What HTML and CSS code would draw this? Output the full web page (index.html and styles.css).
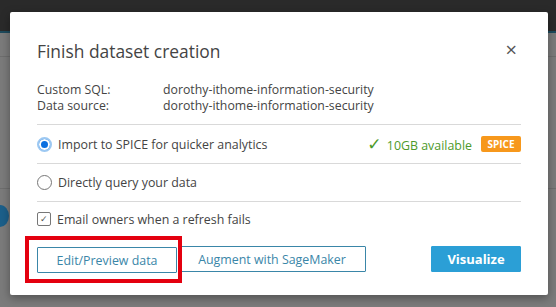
FILE: index.html
```html
<!DOCTYPE html>
<html lang="en">
<head>
    <meta charset="UTF-8">
    <title>Finish dataset creation</title>
    <link rel="stylesheet" href="styles.css">
</head>
<body>

    <!-- Fondo atenuado de la app -->
    <div class="app-bg">
        <div class="topbar"></div>
        <div class="subbar"></div>
        <div class="bg-row"></div>
        <div class="bg-row second"></div>
        <div class="bg-logo"></div>
    </div>

    <div class="modal">
        <div class="modal-header">
            <h2>Finish dataset creation</h2>
            <span class="close-btn">&times;</span>
        </div>

        <div class="meta">
            <div class="meta-row"><span class="meta-label">Custom SQL:</span><span>dorothy-ithome-information-security</span></div>
            <div class="meta-row"><span class="meta-label">Data source:</span><span>dorothy-ithome-information-security</span></div>
        </div>

        <div class="option">
            <span class="radio checked"></span>
            <span class="option-text">Import to SPICE for quicker analytics</span>
            <span class="available"><span class="tick">&#10003;</span> 10GB available</span>
            <span class="spice-badge">SPICE</span>
        </div>
        <div class="option">
            <span class="radio"></span>
            <span class="option-text">Directly query your data</span>
        </div>
        <div class="option last">
            <span class="checkbox">&#10003;</span>
            <span class="option-text">Email owners when a refresh fails</span>
        </div>

        <div class="actions">
            <div class="highlight">
                <button class="btn btn-outline">Edit/Preview data</button>
            </div>
            <button class="btn btn-outline wide">Augment with SageMaker</button>
            <button class="btn btn-primary">Visualize</button>
        </div>
    </div>

</body>
</html>
```

FILE: styles.css
```css
* {
    margin: 0;
    padding: 0;
    box-sizing: border-box;
}

body {
    width: 556px;
    height: 307px;
    overflow: hidden;
    background-color: #7b7b7b;
    font-family: 'Open Sans', 'Liberation Sans', sans-serif;
    position: relative;
}

/* Fondo */
.app-bg {
    height: 100%;
}

.topbar {
    height: 31px;
    background-color: #2a2a2a;
}

.subbar {
    height: 2px;
    background-color: #1d4a5c;
}

.bg-row {
    height: 24px;
    border-bottom: 1px solid #6e6e6e;
}

.bg-row.second {
    height: 132px;
}

.bg-logo {
    width: 18px;
    height: 22px;
    margin-top: 16px;
    margin-left: -9px;
    border-radius: 50%;
    background-color: #1b5f8a;
}

/* Modal */
.modal {
    position: absolute;
    top: 12px;
    left: 10px;
    width: 538px;
    height: 283px;
    background-color: #fff;
    border-radius: 2px;
    box-shadow: 0 3px 10px rgba(0,0,0,0.35);
    padding: 27px 27px 0 27px;
    color: #444;
}

.modal-header {
    display: flex;
    justify-content: space-between;
    align-items: center;
    height: 24px;
}

.modal-header h2 {
    font-size: 17.4px;
    font-weight: 400;
    color: #444;
}

.close-btn {
    font-size: 20px;
    color: #555;
    margin-right: 4px;
    margin-top: -4px;
}

.meta {
    margin-top: 19px;
    margin-bottom: 10px;
    font-size: 12.3px;
    line-height: 16px;
}

.meta-label {
    display: inline-block;
    width: 126px;
}

.option {
    display: flex;
    align-items: center;
    height: 39px;
    border-top: 1px solid #d9d9d9;
    font-size: 12.4px;
    color: #444;
}

.option + .option {
    height: 38px;
}

.option.last {
    height: 35px;
}

.radio {
    width: 15px;
    height: 15px;
    border: 1px solid #777;
    border-radius: 50%;
    margin-right: 6px;
    flex-shrink: 0;
}

.radio.checked {
    border: 2px solid #9cc8f2;
    background-color: #0a6fe0;
    box-shadow: inset 0 0 0 2px #fff;
}

.checkbox {
    width: 14px;
    height: 14px;
    border: 1px solid #777;
    border-radius: 2px;
    margin-right: 6px;
    font-size: 9px;
    line-height: 12px;
    text-align: center;
    color: #555;
}

.available {
    margin-left: auto;
    color: #4d9a2a;
    font-size: 12.4px;
}

.tick {
    font-size: 17px;
    font-family: 'DejaVu Sans', sans-serif;
    margin-right: 2px;
}

.spice-badge {
    margin-left: 9px;
    width: 40px;
    height: 16px;
    line-height: 16px;
    text-align: center;
    background-color: #f7981c;
    color: #fff;
    font-size: 10px;
    font-weight: 700;
    border-radius: 2px;
}

/* Botones */
.actions {
    display: flex;
    align-items: center;
}

.highlight {
    position: relative;
    z-index: 1;
    border: 4px solid #e4000f;
    padding: 7px 1px 6px 8px;
    margin-left: -12px;
}

.btn {
    height: 26px;
    font-family: inherit;
    font-size: 12.4px;
    background-color: #fff;
    border: 1px solid #3a86a8;
    color: #3a86a8;
    border-radius: 1px;
}

.btn-outline {
    width: 140px;
}

.btn-outline.wide {
    width: 188px;
    margin-left: -4px;
    margin-top: -1px;
}

.btn-primary {
    margin-left: auto;
    margin-top: -1px;
    width: 90px;
    background-color: #2b9fd6;
    border-color: #2b9fd6;
    color: #fff;
    font-weight: 700;
    font-size: 13px;
}
```
